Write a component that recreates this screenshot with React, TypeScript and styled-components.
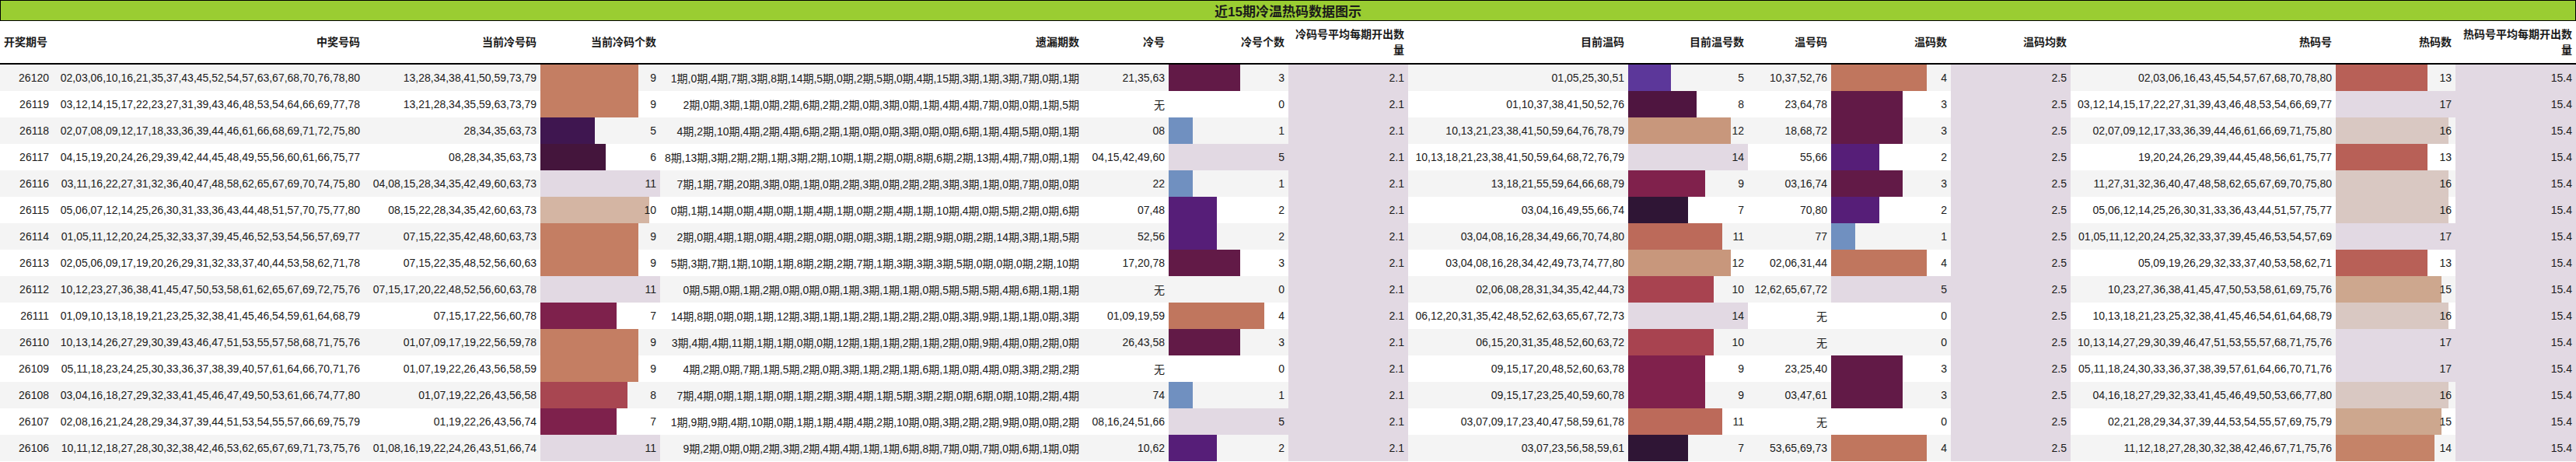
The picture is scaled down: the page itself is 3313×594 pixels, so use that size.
import React from "react";
import styled, { createGlobalStyle } from "styled-components";

const GlobalStyle = createGlobalStyle`
  body {
    margin: 0;
    background: #ffffff;
    font-family: "Liberation Sans", "Noto Sans CJK SC", sans-serif;
    color: #1a1a1a;
  }
`;

const LILAC = "#e2d9e3";
const COLS = "68px 400px 227px 154px 544px 110px 154px 154px 283px 154px 107px 154px 154px 341px 154px 155px";
const BAR_W = 154;

const Sheet = styled.div`
  width: 3313px;
`;

const Title = styled.div`
  height: 25px;
  background: #9acd32;
  border: 1px solid #000;
  display: flex;
  align-items: center;
  justify-content: center;
  font-size: 17px;
  font-weight: 700;
`;

const Row = styled.div<{ $alt?: boolean }>`
  display: grid;
  grid-template-columns: ${COLS};
  height: 34px;
  background: ${({ $alt }) => ($alt ? "#f4f4f4" : "#ffffff")};
`;

const HeadRow = styled(Row)`
  height: 54px;
  border-bottom: 2px solid #000;
`;

const HeadCell = styled.div<{ $left?: boolean }>`
  display: flex;
  align-items: center;
  justify-content: ${({ $left }) => ($left ? "flex-start" : "flex-end")};
  text-align: ${({ $left }) => ($left ? "left" : "right")};
  padding: 0 5px;
  font-size: 14px;
  font-weight: 700;
  line-height: 20px;
`;

const Cell = styled.div<{ $fill?: string; $bar?: { w: number; c: string } }>`
  display: flex;
  align-items: center;
  justify-content: flex-end;
  padding: 0 5px;
  font-size: 14px;
  white-space: nowrap;
  background: ${({ $fill, $bar }) =>
    $fill
      ? $fill
      : $bar
      ? `linear-gradient(to right, ${$bar.c} ${$bar.w}px, transparent ${$bar.w}px)`
      : "transparent"};
`;

type Scale = { max: number; colors: Record<number, string> };

const coldScale: Scale = {
  max: 11,
  colors: { 5: "#3f1650", 6: "#44153c", 7: "#7e214c", 8: "#a84651", 9: "#c47e63", 10: "#d4b5a3" },
};
const smallScale: Scale = {
  max: 5,
  colors: { 1: "#7090c0", 2: "#561e78", 3: "#621a47", 4: "#c0765e" },
};
const warmScale: Scale = {
  max: 14,
  colors: { 5: "#5c379a", 7: "#2f1535", 8: "#4f1540", 9: "#80214c", 10: "#a84350", 11: "#bc6a5a", 12: "#c8977c" },
};
const hotScale: Scale = {
  max: 17,
  colors: { 13: "#b86057", 14: "#c58368", 15: "#cda78e", 16: "#d9c8c2" },
};

const BarCell = ({ v, scale }: { v: number; scale: Scale }) => {
  if (v >= scale.max) return <Cell $fill={LILAC}>{v}</Cell>;
  if (v <= 0) return <Cell>{v}</Cell>;
  return <Cell $bar={{ w: Math.round((v / scale.max) * BAR_W), c: scale.colors[v] }}>{v}</Cell>;
};

const headers = [
  "开奖期号", "中奖号码", "当前冷号码", "当前冷码个数", "遗漏期数", "冷号", "冷号个数",
  "冷码号平均每期开出数量", "目前温码", "目前温号数", "温号码", "温码数", "温码均数",
  "热码号", "热码数", "热码号平均每期开出数量",
];

type R = [string, string, string, number, string, string, number, string, number, string, number, string, number];

const rows: R[] = [
  ["26120", "02,03,06,10,16,21,35,37,43,45,52,54,57,63,67,68,70,76,78,80", "13,28,34,38,41,50,59,73,79", 9, "1期,0期,4期,7期,3期,8期,14期,5期,0期,2期,5期,0期,4期,15期,3期,1期,3期,7期,0期,1期", "21,35,63", 3, "01,05,25,30,51", 5, "10,37,52,76", 4, "02,03,06,16,43,45,54,57,67,68,70,78,80", 13],
  ["26119", "03,12,14,15,17,22,23,27,31,39,43,46,48,53,54,64,66,69,77,78", "13,21,28,34,35,59,63,73,79", 9, "2期,0期,3期,1期,0期,2期,6期,2期,2期,0期,3期,0期,1期,4期,4期,7期,0期,0期,1期,5期", "无", 0, "01,10,37,38,41,50,52,76", 8, "23,64,78", 3, "03,12,14,15,17,22,27,31,39,43,46,48,53,54,66,69,77", 17],
  ["26118", "02,07,08,09,12,17,18,33,36,39,44,46,61,66,68,69,71,72,75,80", "28,34,35,63,73", 5, "4期,2期,10期,4期,2期,4期,6期,2期,1期,0期,0期,3期,0期,0期,6期,1期,4期,5期,0期,1期", "08", 1, "10,13,21,23,38,41,50,59,64,76,78,79", 12, "18,68,72", 3, "02,07,09,12,17,33,36,39,44,46,61,66,69,71,75,80", 16],
  ["26117", "04,15,19,20,24,26,29,39,42,44,45,48,49,55,56,60,61,66,75,77", "08,28,34,35,63,73", 6, "8期,13期,3期,2期,2期,1期,3期,2期,10期,1期,2期,0期,8期,6期,2期,13期,4期,7期,0期,1期", "04,15,42,49,60", 5, "10,13,18,21,23,38,41,50,59,64,68,72,76,79", 14, "55,66", 2, "19,20,24,26,29,39,44,45,48,56,61,75,77", 13],
  ["26116", "03,11,16,22,27,31,32,36,40,47,48,58,62,65,67,69,70,74,75,80", "04,08,15,28,34,35,42,49,60,63,73", 11, "7期,1期,7期,20期,3期,0期,1期,0期,2期,3期,0期,2期,2期,3期,3期,1期,0期,7期,0期,0期", "22", 1, "13,18,21,55,59,64,66,68,79", 9, "03,16,74", 3, "11,27,31,32,36,40,47,48,58,62,65,67,69,70,75,80", 16],
  ["26115", "05,06,07,12,14,25,26,30,31,33,36,43,44,48,51,57,70,75,77,80", "08,15,22,28,34,35,42,60,63,73", 10, "0期,1期,14期,0期,4期,0期,1期,4期,1期,0期,2期,4期,1期,10期,4期,0期,5期,2期,0期,6期", "07,48", 2, "03,04,16,49,55,66,74", 7, "70,80", 2, "05,06,12,14,25,26,30,31,33,36,43,44,51,57,75,77", 16],
  ["26114", "01,05,11,12,20,24,25,32,33,37,39,45,46,52,53,54,56,57,69,77", "07,15,22,35,42,48,60,63,73", 9, "2期,0期,4期,1期,0期,4期,2期,0期,0期,0期,3期,1期,2期,9期,0期,2期,14期,3期,1期,5期", "52,56", 2, "03,04,08,16,28,34,49,66,70,74,80", 11, "77", 1, "01,05,11,12,20,24,25,32,33,37,39,45,46,53,54,57,69", 17],
  ["26113", "02,05,06,09,17,19,20,26,29,31,32,33,37,40,44,53,58,62,71,78", "07,15,22,35,48,52,56,60,63", 9, "5期,3期,7期,1期,10期,1期,8期,2期,2期,7期,1期,3期,3期,3期,5期,0期,0期,0期,2期,10期", "17,20,78", 3, "03,04,08,16,28,34,42,49,73,74,77,80", 12, "02,06,31,44", 4, "05,09,19,26,29,32,33,37,40,53,58,62,71", 13],
  ["26112", "10,12,23,27,36,38,41,45,47,50,53,58,61,62,65,67,69,72,75,76", "07,15,17,20,22,48,52,56,60,63,78", 11, "0期,5期,0期,1期,2期,0期,0期,0期,1期,3期,1期,1期,0期,5期,5期,5期,4期,6期,1期,1期", "无", 0, "02,06,08,28,31,34,35,42,44,73", 10, "12,62,65,67,72", 5, "10,23,27,36,38,41,45,47,50,53,58,61,69,75,76", 15],
  ["26111", "01,09,10,13,18,19,21,23,25,32,38,41,45,46,54,59,61,64,68,79", "07,15,17,22,56,60,78", 7, "14期,8期,0期,0期,1期,12期,3期,1期,1期,2期,1期,2期,2期,0期,3期,9期,1期,1期,0期,3期", "01,09,19,59", 4, "06,12,20,31,35,42,48,52,62,63,65,67,72,73", 14, "无", 0, "10,13,18,21,23,25,32,38,41,45,46,54,61,64,68,79", 16],
  ["26110", "10,13,14,26,27,29,30,39,43,46,47,51,53,55,57,58,68,71,75,76", "01,07,09,17,19,22,56,59,78", 9, "3期,4期,4期,11期,1期,1期,0期,0期,12期,1期,1期,2期,1期,2期,0期,9期,4期,0期,2期,0期", "26,43,58", 3, "06,15,20,31,35,48,52,60,63,72", 10, "无", 0, "10,13,14,27,29,30,39,46,47,51,53,55,57,68,71,75,76", 17],
  ["26109", "05,11,18,23,24,25,30,33,36,37,38,39,40,57,61,64,66,70,71,76", "01,07,19,22,26,43,56,58,59", 9, "4期,2期,0期,7期,1期,5期,2期,0期,3期,1期,2期,1期,6期,1期,0期,4期,0期,3期,2期,2期", "无", 0, "09,15,17,20,48,52,60,63,78", 9, "23,25,40", 3, "05,11,18,24,30,33,36,37,38,39,57,61,64,66,70,71,76", 17],
  ["26108", "03,04,16,18,27,29,32,33,41,45,46,47,49,50,53,61,66,74,77,80", "01,07,19,22,26,43,56,58", 8, "7期,4期,0期,1期,1期,0期,1期,2期,3期,4期,1期,5期,3期,2期,0期,6期,0期,10期,2期,4期", "74", 1, "09,15,17,23,25,40,59,60,78", 9, "03,47,61", 3, "04,16,18,27,29,32,33,41,45,46,49,50,53,66,77,80", 16],
  ["26107", "02,08,16,21,24,28,29,34,37,39,44,51,53,54,55,57,66,69,75,79", "01,19,22,26,43,56,74", 7, "1期,9期,9期,4期,10期,0期,1期,1期,4期,4期,2期,10期,0期,3期,2期,2期,9期,0期,0期,2期", "08,16,24,51,66", 5, "03,07,09,17,23,40,47,58,59,61,78", 11, "无", 0, "02,21,28,29,34,37,39,44,53,54,55,57,69,75,79", 15],
  ["26106", "10,11,12,18,27,28,30,32,38,42,46,53,62,65,67,69,71,73,75,76", "01,08,16,19,22,24,26,43,51,66,74", 11, "9期,2期,0期,0期,2期,3期,2期,4期,4期,1期,1期,6期,8期,7期,0期,7期,0期,6期,1期,0期", "10,62", 2, "03,07,23,56,58,59,61", 7, "53,65,69,73", 4, "11,12,18,27,28,30,32,38,42,46,67,71,75,76", 14],
];

const App = () => (
  <Sheet>
    <GlobalStyle />
    <Title>近15期冷温热码数据图示</Title>
    <HeadRow>
      {headers.map((h, i) => (
        <HeadCell key={h} $left={i === 0}>
          {h}
        </HeadCell>
      ))}
    </HeadRow>
    {rows.map((r, i) => (
      <Row key={r[0]} $alt={i % 2 === 0}>
        <Cell>{r[0]}</Cell>
        <Cell>{r[1]}</Cell>
        <Cell>{r[2]}</Cell>
        <BarCell v={r[3]} scale={coldScale} />
        <Cell>{r[4]}</Cell>
        <Cell>{r[5]}</Cell>
        <BarCell v={r[6]} scale={smallScale} />
        <Cell $fill={LILAC}>2.1</Cell>
        <Cell>{r[7]}</Cell>
        <BarCell v={r[8]} scale={warmScale} />
        <Cell>{r[9]}</Cell>
        <BarCell v={r[10]} scale={smallScale} />
        <Cell $fill={LILAC}>2.5</Cell>
        <Cell>{r[11]}</Cell>
        <BarCell v={r[12]} scale={hotScale} />
        <Cell $fill={LILAC}>15.4</Cell>
      </Row>
    ))}
  </Sheet>
);

export default App;
